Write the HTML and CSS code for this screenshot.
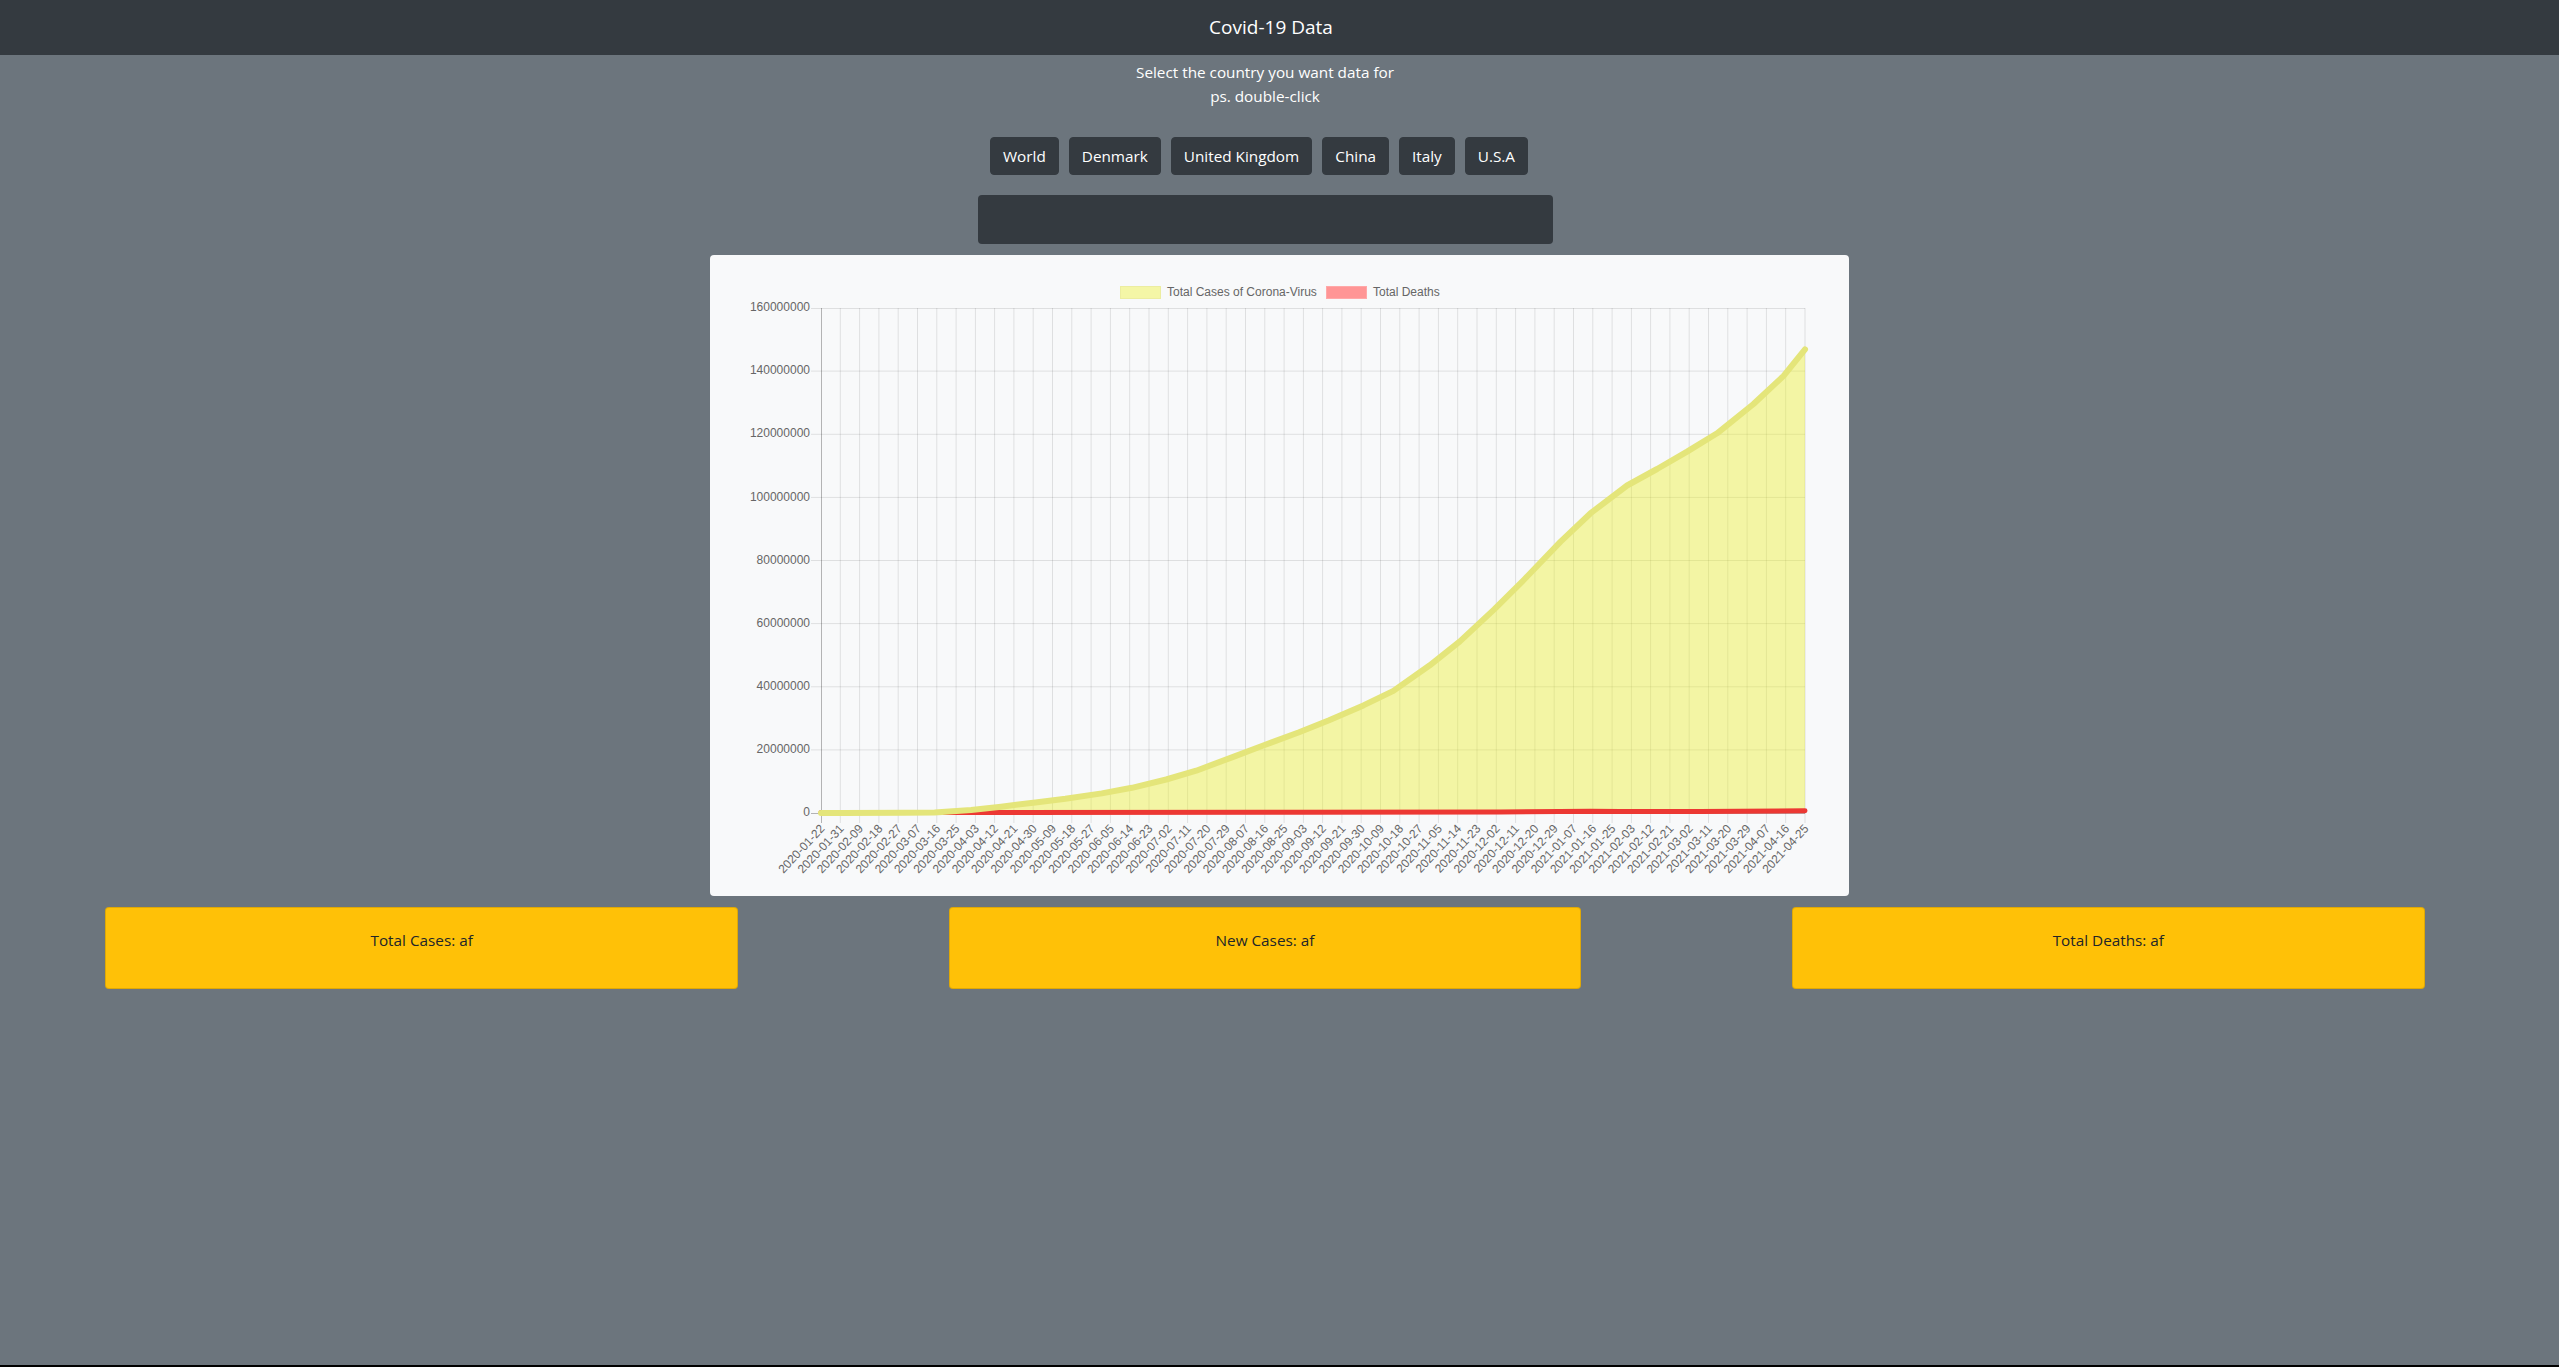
FILE: index.html
```html
<!DOCTYPE html>
<html lang="en">
<head>
<meta charset="utf-8">
<title>Covid-19 Data</title>
<link rel="stylesheet" href="styles.css">
</head>
<body>
<header class="topbar"><h1 class="title">Covid-19 Data</h1></header>
<main class="page">
  <section class="content">
    <p class="intro">Select the country you want data for<br>ps. double-click</p>
    <nav class="countries">
      <button class="country-btn">World</button>
      <button class="country-btn">Denmark</button>
      <button class="country-btn">United Kingdom</button>
      <button class="country-btn">China</button>
      <button class="country-btn">Italy</button>
      <button class="country-btn">U.S.A</button>
    </nav>
    <div class="darkbox"></div>
  </section>
  <section class="chart-row">
    <div class="chart-card">
      <svg class="chart" width="1139" height="641" viewBox="710 255 1139 641" xmlns="http://www.w3.org/2000/svg">
        <g class="legend">
          <rect class="sw-yellow" x="1120.5" y="286.5" width="40" height="12"/>
          <text class="lg" x="1167" y="292.5">Total Cases of Corona-Virus</text>
          <rect class="sw-red" x="1326.5" y="286.5" width="40" height="12"/>
          <text class="lg" x="1373" y="292.5">Total Deaths</text>
        </g>
        <path class="grid" d="M811 749.9H1805M811 686.8H1805M811 623.6H1805M811 560.5H1805M811 497.4H1805M811 434.3H1805M811 371.1H1805M811 308.5H1805"/>
        <path class="grid" d="M840.3 308V823M859.6 308V823M878.9 308V823M898.2 308V823M917.5 308V823M936.8 308V823M956.1 308V823M975.4 308V823M994.6 308V823M1013.9 308V823M1033.2 308V823M1052.5 308V823M1071.8 308V823M1091.1 308V823M1110.4 308V823M1129.7 308V823M1149 308V823M1168.3 308V823M1187.6 308V823M1206.9 308V823M1226.2 308V823M1245.5 308V823M1264.8 308V823M1284.1 308V823M1303.4 308V823M1322.6 308V823M1341.9 308V823M1361.2 308V823M1380.5 308V823M1399.8 308V823M1419.1 308V823M1438.4 308V823M1457.7 308V823M1477 308V823M1496.3 308V823M1515.6 308V823M1534.9 308V823M1554.2 308V823M1573.5 308V823M1592.8 308V823M1612.1 308V823M1631.4 308V823M1650.6 308V823M1669.9 308V823M1689.2 308V823M1708.5 308V823M1727.8 308V823M1747.1 308V823M1766.4 308V823M1785.7 308V823M1805 308V823"/>
        <path class="zero" d="M821.5 308V823M811 813.5H1805"/>
        <g class="yl">
          <text x="810" y="813">0</text>
          <text x="810" y="749.9">20000000</text>
          <text x="810" y="686.8">40000000</text>
          <text x="810" y="623.6">60000000</text>
          <text x="810" y="560.5">80000000</text>
          <text x="810" y="497.4">100000000</text>
          <text x="810" y="434.3">120000000</text>
          <text x="810" y="371.1">140000000</text>
          <text x="810" y="308">160000000</text>
        </g>
        <polygon class="area" points="821,813 842.4,813 904.6,812.7 934.6,812.5 971.1,810.1 1001.1,806.7 1035.4,802.4 1065.4,798.8 1101.8,793.4 1131.9,787.8 1166.2,779.5 1196.2,770.7 1232.6,757.1 1262.6,745.8 1299.1,732.2 1329.1,720.2 1363.4,705.4 1393.4,690.9 1429.8,665.3 1459.9,641.4 1494.2,609.4 1524.2,579.5 1560.6,541.6 1590.6,513.2 1627.1,485.5 1657.1,469 1687.1,451.6 1717.1,433.3 1753.5,404 1783.6,375.9 1805,349.4 1805,813"/>
        <polyline class="deaths" points="821,812.6 1300,812.3 1500,812 1560,811.6 1590,811.2 1620,811.6 1700,811.6 1805,810.8"/>
        <polyline class="cases" points="821,813 842.4,813 904.6,812.7 934.6,812.5 971.1,810.1 1001.1,806.7 1035.4,802.4 1065.4,798.8 1101.8,793.4 1131.9,787.8 1166.2,779.5 1196.2,770.7 1232.6,757.1 1262.6,745.8 1299.1,732.2 1329.1,720.2 1363.4,705.4 1393.4,690.9 1429.8,665.3 1459.9,641.4 1494.2,609.4 1524.2,579.5 1560.6,541.6 1590.6,513.2 1627.1,485.5 1657.1,469 1687.1,451.6 1717.1,433.3 1753.5,404 1783.6,375.9 1805,349.4"/>
        <g class="xl">
          <text transform="translate(823,827) rotate(-47)">2020-01-22</text>
          <text transform="translate(842.3,827) rotate(-47)">2020-01-31</text>
          <text transform="translate(861.6,827) rotate(-47)">2020-02-09</text>
          <text transform="translate(880.9,827) rotate(-47)">2020-02-18</text>
          <text transform="translate(900.2,827) rotate(-47)">2020-02-27</text>
          <text transform="translate(919.5,827) rotate(-47)">2020-03-07</text>
          <text transform="translate(938.8,827) rotate(-47)">2020-03-16</text>
          <text transform="translate(958.1,827) rotate(-47)">2020-03-25</text>
          <text transform="translate(977.4,827) rotate(-47)">2020-04-03</text>
          <text transform="translate(996.6,827) rotate(-47)">2020-04-12</text>
          <text transform="translate(1015.9,827) rotate(-47)">2020-04-21</text>
          <text transform="translate(1035.2,827) rotate(-47)">2020-04-30</text>
          <text transform="translate(1054.5,827) rotate(-47)">2020-05-09</text>
          <text transform="translate(1073.8,827) rotate(-47)">2020-05-18</text>
          <text transform="translate(1093.1,827) rotate(-47)">2020-05-27</text>
          <text transform="translate(1112.4,827) rotate(-47)">2020-06-05</text>
          <text transform="translate(1131.7,827) rotate(-47)">2020-06-14</text>
          <text transform="translate(1151,827) rotate(-47)">2020-06-23</text>
          <text transform="translate(1170.3,827) rotate(-47)">2020-07-02</text>
          <text transform="translate(1189.6,827) rotate(-47)">2020-07-11</text>
          <text transform="translate(1208.9,827) rotate(-47)">2020-07-20</text>
          <text transform="translate(1228.2,827) rotate(-47)">2020-07-29</text>
          <text transform="translate(1247.5,827) rotate(-47)">2020-08-07</text>
          <text transform="translate(1266.8,827) rotate(-47)">2020-08-16</text>
          <text transform="translate(1286.1,827) rotate(-47)">2020-08-25</text>
          <text transform="translate(1305.4,827) rotate(-47)">2020-09-03</text>
          <text transform="translate(1324.6,827) rotate(-47)">2020-09-12</text>
          <text transform="translate(1343.9,827) rotate(-47)">2020-09-21</text>
          <text transform="translate(1363.2,827) rotate(-47)">2020-09-30</text>
          <text transform="translate(1382.5,827) rotate(-47)">2020-10-09</text>
          <text transform="translate(1401.8,827) rotate(-47)">2020-10-18</text>
          <text transform="translate(1421.1,827) rotate(-47)">2020-10-27</text>
          <text transform="translate(1440.4,827) rotate(-47)">2020-11-05</text>
          <text transform="translate(1459.7,827) rotate(-47)">2020-11-14</text>
          <text transform="translate(1479,827) rotate(-47)">2020-11-23</text>
          <text transform="translate(1498.3,827) rotate(-47)">2020-12-02</text>
          <text transform="translate(1517.6,827) rotate(-47)">2020-12-11</text>
          <text transform="translate(1536.9,827) rotate(-47)">2020-12-20</text>
          <text transform="translate(1556.2,827) rotate(-47)">2020-12-29</text>
          <text transform="translate(1575.5,827) rotate(-47)">2021-01-07</text>
          <text transform="translate(1594.8,827) rotate(-47)">2021-01-16</text>
          <text transform="translate(1614.1,827) rotate(-47)">2021-01-25</text>
          <text transform="translate(1633.4,827) rotate(-47)">2021-02-03</text>
          <text transform="translate(1652.6,827) rotate(-47)">2021-02-12</text>
          <text transform="translate(1671.9,827) rotate(-47)">2021-02-21</text>
          <text transform="translate(1691.2,827) rotate(-47)">2021-03-02</text>
          <text transform="translate(1710.5,827) rotate(-47)">2021-03-11</text>
          <text transform="translate(1729.8,827) rotate(-47)">2021-03-20</text>
          <text transform="translate(1749.1,827) rotate(-47)">2021-03-29</text>
          <text transform="translate(1768.4,827) rotate(-47)">2021-04-07</text>
          <text transform="translate(1787.7,827) rotate(-47)">2021-04-16</text>
          <text transform="translate(1807,827) rotate(-47)">2021-04-25</text>
        </g>
      </svg>
    </div>
  </section>
  <section class="stats">
    <div class="stat"><p>Total Cases: af</p></div>
    <div class="stat"><p>New Cases: af</p></div>
    <div class="stat"><p>Total Deaths: af</p></div>
  </section>
</main>
</body>
</html>
```

FILE: styles.css
```css
html {
  background: #000;
}

body {
  margin: 0;
  height: 1365px;
  overflow: hidden;
  background: #6c757d;
  font-family: "Open Sans", "Noto Sans", "Liberation Sans", sans-serif;
  color: #fff;
}

.topbar {
  height: 55px;
  background: #343a40;
  display: flex;
  align-items: center;
  justify-content: center;
  padding-right: 17px;
}

.title {
  margin: 0;
  font-size: 19px;
  font-weight: 400;
  line-height: 1;
  color: #fff;
}

.page {
  width: 2559px;
}

.content {
  width: 2530px;
  display: flex;
  flex-direction: column;
  align-items: center;
}

.intro {
  margin: 5px 0 0;
  font-size: 15.3px;
  line-height: 24px;
  text-align: center;
  color: #fff;
}

.countries {
  margin-top: 29px;
  display: flex;
  gap: 10px;
  padding-right: 12px;
}

.country-btn {
  height: 38px;
  padding: 0 12px;
  background: #343a40;
  border: 1px solid #343a40;
  border-radius: 4px;
  color: #fff;
  font-family: inherit;
  font-size: 15.3px;
  line-height: 24px;
}

.darkbox {
  margin-top: 20px;
  width: 575px;
  height: 49px;
  background: #343a40;
  border-radius: 4px;
}

.chart-row {
  display: flex;
  justify-content: center;
  margin-top: 11px;
}

.chart-card {
  width: 1139px;
  height: 641px;
  background: #f8f9fa;
  border-radius: 4px;
}

.chart {
  display: block;
}

.grid {
  fill: none;
  stroke: rgba(0, 0, 0, 0.1);
  stroke-width: 1;
}

.zero {
  fill: none;
  stroke: rgba(0, 0, 0, 0.28);
  stroke-width: 1;
}

.yl text {
  font: 12px "Liberation Sans", Arial, sans-serif;
  fill: #666;
  text-anchor: end;
  dominant-baseline: middle;
}

.xl text {
  font: 12px "Liberation Sans", Arial, sans-serif;
  fill: #666;
  text-anchor: end;
  dominant-baseline: middle;
}

.lg {
  font: 12px "Liberation Sans", Arial, sans-serif;
  fill: #666;
  dominant-baseline: middle;
}

.sw-yellow {
  fill: #f4f6a6;
  stroke: #eceda0;
  stroke-width: 1;
}

.sw-red {
  fill: #ff9595;
  stroke: #ffa8a8;
  stroke-width: 1;
}

.area {
  fill: rgba(236, 239, 35, 0.4);
  stroke: none;
}

.deaths {
  fill: none;
  stroke: #ec3833;
  stroke-width: 5;
  stroke-linecap: round;
  stroke-linejoin: round;
}

.cases {
  fill: none;
  stroke: #e4e57a;
  stroke-width: 6;
  stroke-linecap: round;
  stroke-linejoin: round;
}

.stats {
  width: 2530px;
  margin-top: 11px;
  display: flex;
  justify-content: space-around;
}

.stat {
  width: 25%;
  box-sizing: border-box;
  padding: 20px;
  background: #ffc107;
  border: 1px solid rgba(0, 0, 0, 0.125);
  border-radius: 4px;
  text-align: center;
  color: #212529;
  font-size: 15.3px;
}

.stat p {
  margin: 0 0 16px;
  line-height: 24px;
}
```
